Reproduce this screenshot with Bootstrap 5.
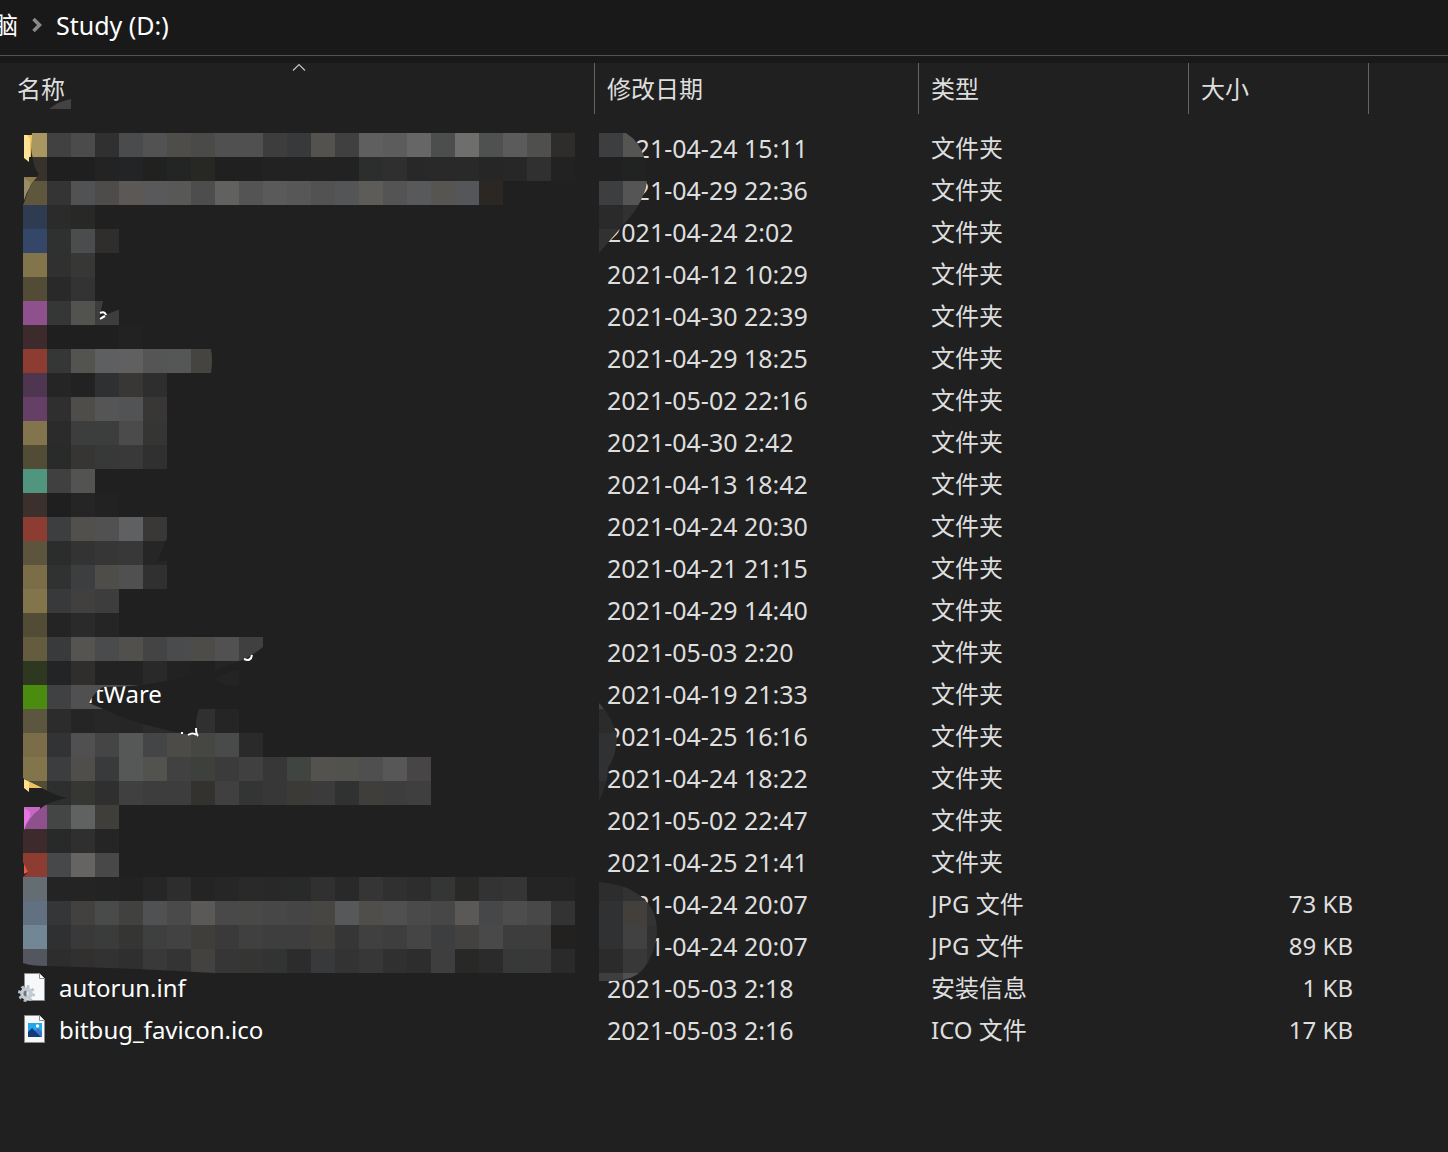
<!DOCTYPE html>
<html lang="zh-CN" data-bs-theme="dark">
<head>
<meta charset="utf-8">
<meta name="viewport" content="width=device-width, initial-scale=1">
<title>Study (D:)</title>
<link href="https://cdn.jsdelivr.net/npm/bootstrap@5.3.0/dist/css/bootstrap.min.css" rel="stylesheet">
<style>
  body { background: #202020; color: #dedede; font-family: "Noto Sans", "Noto Sans CJK SC", sans-serif; font-size: 24px; line-height: 36px; min-height: 100vh; overflow-x: hidden; }
  .topstrip { background: #191919; padding-bottom: 7px; }
  .pathbar { height: 56px; border-bottom: 1px solid #535353; padding-bottom: 6px; gap: 14px; }
  .pathbar a { color: #fff; }
  .crumb-root { margin-left: -6px; }
  .crumb-here, .file-table td:nth-child(2) { font-size: 25px; }
  .file-table { table-layout: fixed; width: 100%; border-collapse: separate; border-spacing: 0; }
  .col-name { width: 595px; } .col-date { width: 324px; } .col-type { width: 270px; } .col-size { width: 180px; }
  .file-table th { height: 51px; padding: 0 12px; font-weight: 400; border-right: 1px solid #636363; }
  .file-table th:first-child, .file-table td:first-child { padding-left: 17px; }
  .file-table th:last-child { border: 0; }
  .file-table th button { color: #dedede; font-size: 24px; line-height: 51px; }
  .file-table tbody::before { content: ""; display: block; height: 13px; }
  .file-table td { height: 42px; padding: 0 12px; white-space: nowrap; }
  .file-table td:nth-child(4) { padding-right: 16px; text-align: right; }
  .file-table a { color: #fff; }
  .file-icon { width: 30px; height: 32px; }
  .sort-mark { width: 14px; height: 8px; margin-left: 2px; }
  .veil { width: 680px; height: 990px; pointer-events: none; }
</style>
<script src="https://cdn.jsdelivr.net/npm/bootstrap@5.3.0/dist/js/bootstrap.bundle.min.js"></script>
</head>
<body>
<header class="topstrip">
  <nav class="pathbar d-flex align-items-center" aria-label="路径">
    <a class="crumb-root text-decoration-none" href="#">脑</a>
    <svg width="10" height="16" viewBox="0 0 10 16" aria-hidden="true"><path d="M1.500 2l6 6-6 6" fill="none" stroke="#8a8a8a" stroke-width="3.500"/></svg>
    <a class="crumb-here text-decoration-none" href="#">Study (D:)</a>
  </nav>
</header>
<main class="position-relative">
  <table class="file-table">
    <colgroup><col class="col-name"><col class="col-date"><col class="col-type"><col class="col-size"><col></colgroup>
    <thead>
      <tr>
        <th scope="col" class="position-relative"><button class="btn btn-link p-0 border-0 text-decoration-none">名称</button>
          <svg class="sort-mark position-absolute top-0 start-50 translate-middle-x" viewBox="0 0 14 8" aria-hidden="true"><path d="M1 7.500l6-6 6 6" fill="none" stroke="#c4c4c4" stroke-width="1.200"/></svg></th>
        <th scope="col"><button class="btn btn-link p-0 border-0 text-decoration-none">修改日期</button></th>
        <th scope="col"><button class="btn btn-link p-0 border-0 text-decoration-none">类型</button></th>
        <th scope="col"><button class="btn btn-link p-0 border-0 text-decoration-none">大小</button></th>
        <th></th>
      </tr>
    </thead>
    <tbody id="files"></tbody>
  </table>
  <svg class="veil position-absolute top-0 start-0" viewBox="0 63 680 990" aria-hidden="true">
    <defs>
      <mask id="nameMask" maskUnits="userSpaceOnUse" x="0" y="63" width="680" height="990">
        <rect x="0" y="63" width="680" height="990" fill="#fff"/>
        <g fill="#000">
          <path d="M23 133H32Q30 147 33 160Q35 170 39 174Q29 185 24 203L23 205Z"/>
          <path d="M103 301Q101 311 99 319Q108 313 119 309.500V301Z"/>
          <path d="M167 538L157 562L167 560Z"/>
          <path d="M211 349Q213 360 211 373H220V349Z"/>
          <path d="M263 647Q252 656 240 661Q225 666 215 671V679Q228 671 240 670V685H263Z"/>
          <path d="M215 671V679L225 685H240V709H199Q194 721 197 736Q150 728 119 716Q101 708 89 703Q95 691 103 687Q135 687 160 682Q190 677 215 671Z"/>
          <path d="M23 778Q36 786 46 790Q57 796 67 798Q52 801 44 806Q29 815 23 832Z"/>
          <path d="M23 862Q25 868 28 872L23 877Z"/>
          <path d="M23 963Q30 966 47 966Q130 968 215 973V975H23Z"/>
        </g>
      </mask>
      <clipPath id="dateClip">
        <path d="M599 133H626Q640 142 644 157Q650 180 644 193Q639 208 624 224L599 253Z"/>
        <path d="M599 703Q615 720 617 739Q616 756 608 768Q608 784 599 801Z"/>
        <path d="M599 882Q629 884 645 900Q657 912 657 932Q656 949 648 962Q638 981 612 981H599Z"/>
      </clipPath>
    </defs>
    <g id="nameCells" mask="url(#nameMask)" shape-rendering="crispEdges"></g>
    <g id="dateCells" clip-path="url(#dateClip)" shape-rendering="crispEdges"></g>
    <path d="M49 109Q59 101 71 99V109Z" fill="#434142"/>
    <path d="M24 135H32Q30 146 31 157H29V162L24 158Z" fill="#ffe294"/><path d="M27 135H32L31 157H30V139Z" fill="#edc25e"/>
    <path d="M24 177H37Q28 187 24 200Z" fill="#8f7c4c"/><path d="M24 178L30 182V187Q26 193 24 200Z" fill="#998c6b"/>
    <path d="M24 779L42 788H29V792L24 788Z" fill="#ffe08d"/><path d="M29 782L42 788H29Z" fill="#edc25e"/>
    <path d="M24 807H40V809Q29 817 24 830Z" fill="#c767c5"/><path d="M24 808L30 812V817Q26 823 24 830Z" fill="#e277df"/>
    <path d="M24 864L28 872L24 874Z" fill="#e85a41"/>
    <g fill="none" stroke="#fff" stroke-width="2">
      <path d="M100 313q5-2 6 2M100 319q3-2 5-3"/><path d="M244 659q7 3 8-4"/><path d="M181 733h2M188 735q5-3 8 0M196 728q0 6 2 8"/>
    </g>
  </svg>
</main>
<script>
  const folder = '文件夹';
  const files = [
    ['', '2021-04-24 15:11', folder], ['', '2021-04-29 22:36', folder], ['', '2021-04-24 2:02', folder],
    ['', '2021-04-12 10:29', folder], ['', '2021-04-30 22:39', folder], ['', '2021-04-29 18:25', folder],
    ['', '2021-05-02 22:16', folder], ['', '2021-04-30 2:42', folder], ['', '2021-04-13 18:42', folder],
    ['', '2021-04-24 20:30', folder], ['', '2021-04-21 21:15', folder], ['', '2021-04-29 14:40', folder],
    ['', '2021-05-03 2:20', folder], ['SoftWare', '2021-04-19 21:33', folder], ['', '2021-04-25 16:16', folder],
    ['', '2021-04-24 18:22', folder], ['', '2021-05-02 22:47', folder], ['', '2021-04-25 21:41', folder],
    ['', '2021-04-24 20:07', 'JPG 文件', '73 KB'], ['', '2021-04-24 20:07', 'JPG 文件', '89 KB'],
    ['autorun.inf', '2021-05-03 2:18', '安装信息', '1 KB'], ['bitbug_favicon.ico', '2021-05-03 2:16', 'ICO 文件', '17 KB']
  ];
  const sheet = '<path d="M7.500 1.500H22.500L27.500 6.500V28.500H7.500Z" fill="#f7f8f9" stroke="#8d8d8d"/><path d="M22.500 1.500V6.500H27.500" fill="#fff" stroke="#8d8d8d"/>';
  const icons = {
    'autorun.inf': sheet + '<circle cx="9.500" cy="21.500" r="7" fill="none" stroke="#b9c3ca" stroke-width="3" stroke-dasharray="2.700 2.800"/><circle cx="9.500" cy="21.500" r="4.300" fill="#e3e7ea" stroke="#c3ccd3" stroke-width="4"/><path d="M9.500 18.500a3 3 0 0 0 0 6z" fill="#6d767d"/>',
    'bitbug_favicon.ico': sheet + '<path d="M11 9h14v14H11z" fill="#23a8ea"/><circle cx="20.500" cy="12" r="1.700" fill="#fff"/><path d="M18 17l3-3 4 4v5h-7z" fill="#3f72c8"/><path d="M11 18l4-4 9 9H11z" fill="#153a7c"/>'
  };
  document.getElementById('files').innerHTML = files.map(([name, date, type, size = '']) => {
    const icon = `<svg class="file-icon flex-shrink-0" viewBox="0 0 30 32" aria-hidden="true">${icons[name] || ''}</svg>`;
    const label = name ? `<a class="d-flex align-items-center gap-2 text-decoration-none lh-1" href="#">${icon}<span class="ps-1">${name}</span></a>` : '';
    return `<tr><td>${label}</td><td>${date}</td><td>${type}</td><td>${size}</td><td></td></tr>`;
  }).join('');

  // Censor mosaic: 24px tiles, one string per tile row.
  const nameRows = [
    'a89760 414141 4b4b4b 303030 4a4b4d 525252 4f4d4a 4a4a49 505050 505050 3d3d3d 38393b 54524f 404040 5f5f5f 5c5c5c 666666 4b4e4d 6e6e6c 4e5150 5b5b5b 4f4f4d 2e2d2b',
    '37332c 1f1f1f 1f1f1f 232323 222426 212120 222524 272724 202020 202020 222222 222222 222222 222222 2c2e2d 2f2f2f 282828 292929 292929 262626 272727 303030 222222',
    '5e573d 343434 515254 4e4c4a 5b5855 59595b 585856 4d4d4d 61615f 545454 5a5a5a 575757 525252 545556 5e5c59 545454 58595a 575552 55565a 2b2723',
    '2f3b51 2b2b2b 282826', '354768 2f3130 4b4c4e 302e2c', '82744b 303030 373735', '524c36 292929 333333',
    '8e518d 343735 52524f 3d3d3d', '3c2a2c 1f1f1f 1f1f1f 1f1f1f 222222',
    '8d3c32 343735 53534f 5e5f61 606060 555555 545756 464441', '4f3650 252525 222222 2f3032 383735 2e2e2e',
    '663f67 2f2f2f 4f4d4a 555555 525355 393735', '82754d 2b2b2b 3c3e3d 3c3e3d 4b4b4b 353533',
    '524c36 292b2a 363533 373938 393939 303030', '50967e 404040 535351', '3b302c 1f1f1f 252525 222222',
    '8d3c32 3d3e40 52504d 515151 5f6062 393836', '5c543d 2b2d2c 333333 363636 383838 262626',
    '7a6d47 303231 3d3e40 4f4d4a 505050 303030', '82744b 38393b 42403e 3d3d3d', '524c36 242424 2a2a2a 252525',
    '655b3e 393a3c 565451 4a4b4d 52504d 444444 4a4b4d 4e4c49 515151 404040',
    '2e371f 232426 302e2c 222222 222222 292929 222222 202020 242424',
    '4b8b10 404143 505050 505050 505050 505050', '5c553f 2b2c2b 252525 272727 262626 2b2b2b 2a2a2a 303030 252525',
    '7a6d47 323335 505050 454545 555857 444547 4d4b48 464642 484b49 2a2a2a',
    '82744b 3c3d3f 504e4b 393a3b 555857 52524f 414141 3e403e 3b3b3b 404040 373737 414542 54524e 51514d 4f4f4f 575757 484546',
    '524c36 2d2f2e 363633 2f2f2f 404040 3d3d3d 3d3d3d 34322f 404040 323534 373737 3c3a37 3b3b3b 303231 403e3b 3d3d3d 3f3f3f',
    '8e518d 444646 5f6260 403e3b', '3c2a2c 282a29 2f2f2f 252525', '8d3c32 474849 666462 484848',
    '656d74 242424 242424 232323 222222 262626 2d2d2d 242424 262626 292929 282828 282a29 303030 292929 353535 303030 2d2d2d 343635 292927 333333 353535 242424 242424',
    '617182 343638 43413f 484b49 41413f 505152 4a4a4a 5b5957 494949 494947 474747 454545 484643 56585a 504e4b 505050 4a4a4a 474747 5b5957 464749 4d4d4d 484848 333333',
    '718795 2e3032 393939 3a3c3b 353533 3d403e 424242 403e3b 3a3a3a 404040 3e3e3e 3e3e3e 42403d 363636 404040 3e3e3e 454545 3c3e40 444240 494949 3d3d3d 3d3d3d 23211f',
    '53565e 2d2d2d 31302e 323232 2f2f2f 393939 343434 434240 363636 353533 313433 2c2c2c 37393b 333333 373737 303030 2d2d2d 3e3e3e 282826 2b2b2b 373938 383838 2a2a2a'
  ];
  const dateRows = {
    0: '3d3e40 555553', 1: '202020 212322 202020', 2: '3d3e40 555555 555555', 3: '2a2a2a 303130', 4: '303133 303133',
    23: '444444', 24: '2b2b2b', 25: '303133', 26: '303133', 27: '2b2b2b',
    31: '2d2d2d 313332 313332', 32: '303133 433f3b 333333', 33: '303133 414141 303030', 34: '2b2b2b 383838 303030', 35: '3d3e40 505050'
  };
  const tiles = (rows, left) => Object.entries(rows).map(([r, line]) => line.split(' ').map((c, i) =>
    `<rect x="${left + i * 24}" y="${133 + r * 24}" width="24" height="24" fill="#${c}"/>`).join('')).join('');
  document.getElementById('nameCells').innerHTML = tiles(nameRows, 23);
  document.getElementById('dateCells').innerHTML = tiles(dateRows, 599);
</script>
</body>
</html>
